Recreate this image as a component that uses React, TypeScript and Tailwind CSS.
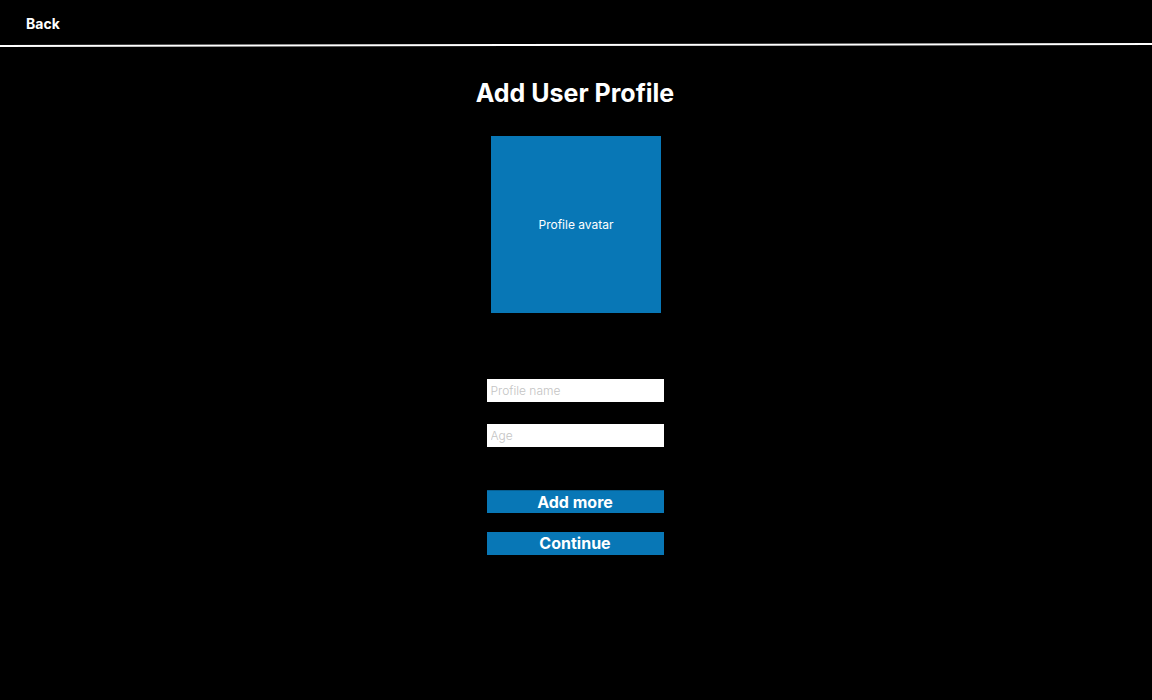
export default function App() {
  return (
    <div className="min-h-[700px] w-full bg-black font-['Inter',sans-serif] text-white">
      {/* top bar */}
      <header className="flex h-[44px] items-center pl-[26px] pt-[2px]">
        <button className="text-[14px] font-bold">Back</button>
      </header>
      <div className="h-[2px] w-full -rotate-[0.1deg] bg-white" />

      <main className="flex flex-col items-center">
        <h1 className="mt-[31px] pr-[2px] text-[25px] font-bold leading-[32px]">Add User Profile</h1>

        <div className="mt-[27px] flex h-[177px] w-[170px] items-center justify-center bg-[#0877b6] text-[12px]">
          Profile avatar
        </div>

        <div className="mr-[2px] mt-[66px] flex w-[177px] flex-col gap-[22px]">
          <input
            placeholder="Profile name"
            className="h-[23px] w-full bg-white px-[4px] text-[12px] font-light text-black outline-none placeholder:text-[#c4c4c4]"
          />
          <input
            placeholder="Age"
            className="h-[23px] w-full bg-white px-[4px] text-[12px] font-light text-black outline-none placeholder:text-[#c4c4c4]"
          />
        </div>

        <div className="mr-[2px] mt-[43px] flex w-[177px] flex-col gap-[19px]">
          <button className="h-[23px] w-full border-t border-[#075f92] bg-[#0877b6] text-[16px] font-bold leading-none">Add more</button>
          <button className="h-[23px] w-full bg-[#0877b6] pb-[1px] text-[16px] font-bold leading-none">Continue</button>
        </div>
      </main>
    </div>
  );
}
